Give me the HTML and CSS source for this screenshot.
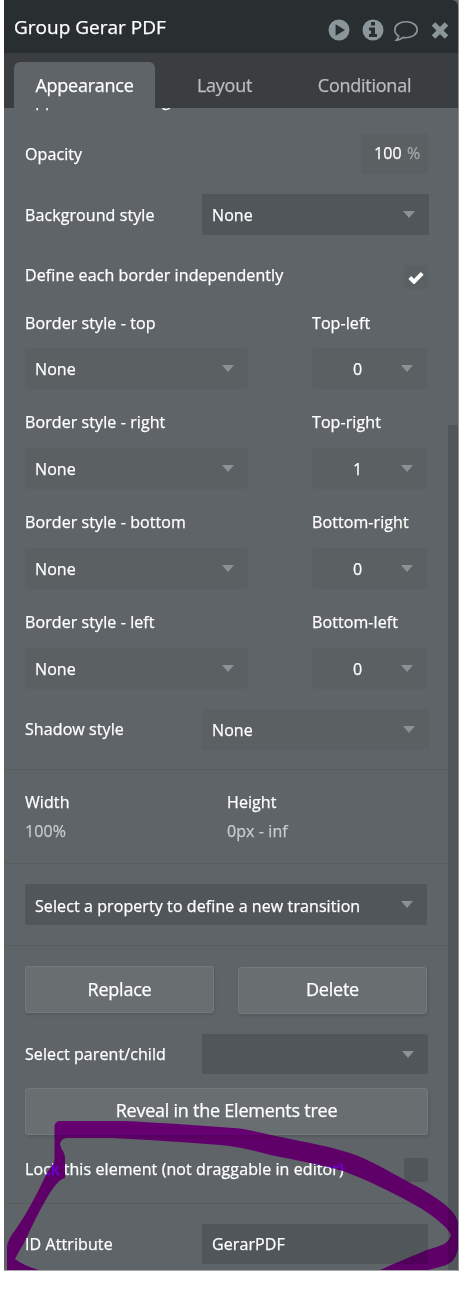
FILE: index.html
```html
<!DOCTYPE html>
<html lang="en">
<head>
    <meta charset="UTF-8">
    <meta name="viewport" content="width=device-width, initial-scale=1.0">
    <title>Group Gerar PDF</title>
    <link rel="stylesheet" href="styles.css">
</head>
<body>
    <div class="panel">
        <div class="panel-header">
            <h1>Group Gerar PDF</h1>
            <div class="header-icons">
                <svg width="22" height="22" viewBox="0 0 22 22"><path fill-rule="evenodd" d="M11 .5a10.5 10.5 0 1 0 0 21a10.5 10.5 0 0 0 0-21zM7.600 5.300v11.400L17 11z"/></svg>
                <svg width="22" height="22" viewBox="0 0 22 22"><circle cx="11" cy="11" r="10.5"/><path class="icon-cut" d="M9 3h4v3.600H9zM7 8.500h6v6.400h2V18H7v-3.100h2v-3.300H7z"/></svg>
                <svg class="icon-comment" width="26" height="22" viewBox="0 0 26 22"><path d="M13 2.700c6.300 0 11.200 3.500 11.200 8s-4.900 8-11.200 8c-1 0-2-.1-2.900-.3C8.200 20 6 21 3.200 21.300c1.400-1.300 2.200-2.500 2.500-4.100C3.300 15.600 1.800 13.300 1.800 10.700c0-4.500 4.900-8 11.200-8z"/></svg>
                <svg class="icon-close" width="18" height="18" viewBox="0 0 18 18"><path d="M2.500 3l13 13M15.500 3l-13 13"/></svg>
            </div>
        </div>
        <div class="tabs">
            <div class="tab active">Appearance</div>
            <div class="tab tab-layout">Layout</div>
            <div class="tab tab-conditional">Conditional</div>
        </div>
        <div class="panel-body">
            <div class="properties">
                <div class="section-title"><span>Appearance settings</span></div>
                <div class="row opacity-row">
                    <label>Opacity</label>
                    <div class="field number">100 <span>%</span></div>
                </div>
                <div class="row background-row">
                    <label>Background style</label>
                    <div class="field select wide dark">None</div>
                </div>
                <div class="row check-row">
                    <label>Define each border independently</label>
                    <div class="checkbox">
                        <svg width="16" height="13" viewBox="0 0 16 13"><path d="M1.800 6.500l4.200 4.200L14.200 2.300"/></svg>
                    </div>
                </div>
                <div class="border-grid">
                    <label>Border style - top</label>
                    <label>Top-left</label>
                    <div class="field select">None</div>
                    <div class="field select radius">0</div>
                    <label>Border style - right</label>
                    <label>Top-right</label>
                    <div class="field select">None</div>
                    <div class="field select radius">1</div>
                    <label>Border style - bottom</label>
                    <label>Bottom-right</label>
                    <div class="field select">None</div>
                    <div class="field select radius">0</div>
                    <label>Border style - left</label>
                    <label>Bottom-left</label>
                    <div class="field select">None</div>
                    <div class="field select radius">0</div>
                </div>
                <div class="row shadow-row">
                    <label>Shadow style</label>
                    <div class="field select wide">None</div>
                </div>
                <div class="section size-section">
                    <div class="size">
                        <label>Width</label>
                        <p>100%</p>
                    </div>
                    <div class="size">
                        <label>Height</label>
                        <p>0px - inf</p>
                    </div>
                </div>
                <div class="section transition-section">
                    <div class="field select dark">Select a property to define a new transition</div>
                </div>
                <div class="section action-section">
                    <div class="buttons">
                        <button>Replace</button>
                        <button class="delete">Delete</button>
                    </div>
                    <div class="row parent-row">
                        <label>Select parent/child</label>
                        <div class="field select wide dark"></div>
                    </div>
                    <button class="reveal">Reveal in the Elements tree</button>
                    <div class="row lock-row">
                        <label>Lock this element (not draggable in editor)</label>
                        <div class="checkbox dark"></div>
                    </div>
                </div>
                <div class="section id-section">
                    <div class="row">
                        <label>ID Attribute</label>
                        <div class="field wide dark">GerarPDF</div>
                    </div>
                </div>
            </div>
            <div class="scrollbar"><div class="scrollbar-thumb"></div></div>
        </div>
        <!-- hand-drawn marker around the ID attribute -->
        <svg class="marker" width="464" height="160" viewBox="0 1120 464 160">
            <path fill-rule="evenodd" d="M59 1121H125C165 1123 205 1126 240 1128.500C260 1132 280 1137 300 1141C325 1146 345 1150 365 1159C385 1168 400 1178 420 1188C440 1200 455 1210 458 1222V1249C456 1260 450 1264 443 1266L428 1270H380C395 1263 413 1256 427 1250C440 1246 449 1244 451 1235C449 1229 436 1218 422 1209C400 1196 370 1181 343 1171C318 1164 296 1160 275 1156C255 1151 240 1146.500 220 1145C185 1142 150 1140 112 1138H66Q61 1139 60 1144C61 1150 65 1152 65 1158V1178C59 1179 53 1188 48 1196C39 1211 31 1228 24 1243Q19 1251 15 1259Q24 1266 39 1270H7V1246C9 1237 14 1232 18 1226C28 1211 37 1194 45 1177C49 1168 55 1165 54.500 1158V1126Q55 1122 59 1121z"/>
        </svg>
    </div>
</body>
</html>
```
FILE: styles.css
```css
* {
    box-sizing: border-box;
}
body {
    margin: 0;
    background-color: #fff;
    font-family: "Open Sans", "Noto Sans", sans-serif;
    font-size: 16px;
    letter-spacing: 0.09px;
    -webkit-text-stroke: 0.25px;
    color: #fff;
}
.panel {
    position: relative;
    width: 455px;
    height: 1271px;
    margin-left: 4px;
    display: flex;
    flex-direction: column;
    background-color: #5f6468;
    border-right: 1px solid #8e9193;
    border-bottom: 1px solid #a5a7a9;
}
.panel-header {
    height: 53px;
    padding: 0 9px 0 10px;
    display: flex;
    justify-content: space-between;
    background-color: #292f31;
    border-top-right-radius: 6px;
}
.panel-header h1 {
    margin: 0;
    font-size: 19px;
    font-weight: 400;
    letter-spacing: 0;
    line-height: 54px;
}
.header-icons {
    display: flex;
    align-items: center;
    padding-top: 6px;
    fill: #8b969b;
}
.header-icons svg + svg {
    margin-left: 12px;
}
.header-icons .icon-cut {
    fill: #292f31;
}
.header-icons svg.icon-comment {
    margin-left: 9px;
    fill: none;
    stroke: #8b969b;
    stroke-width: 1.6;
}
.header-icons .icon-close {
    stroke: #8b969b;
    stroke-width: 5;
}
.tabs {
    height: 55px;
    padding: 9px 0 0 10px;
    display: flex;
    background-color: #3a3e40;
    font-size: 18px;
    letter-spacing: -0.25px;
    line-height: 46px;
}
.tab {
    color: #bbbdbe;
    text-align: center;
}
.tab.active {
    width: 141px;
    color: #fff;
    background-color: #5f6468;
    border-radius: 6px 6px 0 0;
}
.tab-layout {
    width: 139px;
}
.tab-conditional {
    width: 141px;
}
.panel-body {
    flex: 1;
    display: flex;
    overflow: hidden;
}
.properties {
    width: 444px;
    padding-left: 21px;
}
.scrollbar {
    width: 10px;
    padding-top: 317px;
}
.scrollbar-thumb {
    height: 100%;
    background-color: #505659;
}
.section-title {
    height: 26px;
    overflow: hidden;
}
.section-title span {
    display: block;
    margin-top: -19px;
    line-height: 22px;
}
label {
    line-height: 22px;
}
.row {
    display: flex;
    justify-content: space-between;
    align-items: center;
    width: 403px;
}
.field {
    position: relative;
    height: 41px;
    padding-left: 10px;
    line-height: 42px;
    background-color: #5b6062;
    border-radius: 2px;
}
.field.dark, .checkbox.dark {
    background-color: #505659;
}
.field.wide {
    width: 227px;
}
.select::after {
    content: "";
    position: absolute;
    top: 17px;
    right: 14px;
    border: 6px solid transparent;
    border-top: 7px solid #8b9194;
    border-bottom: 0;
}
.number {
    width: 67px;
    height: 40px;
    padding-left: 13px;
    line-height: 39px;
}
.number span {
    margin-left: 1px;
    color: #a5a8aa;
}
.background-row {
    width: 404px;
    margin-top: 20px;
}
.check-row {
    align-items: flex-start;
    margin-top: 30px;
}
.check-row label {
    margin-top: -1px;
}
.checkbox {
    width: 24px;
    height: 24px;
    display: flex;
    justify-content: center;
    align-items: center;
    background-color: #5b6062;
    border-radius: 2px;
}
.checkbox path {
    fill: none;
    stroke: #fff;
    stroke-width: 4;
}
.border-grid {
    display: grid;
    grid-template-columns: 223px 115px;
    grid-template-rows: 36px 41px 59px 41px 59px 41px 59px 41px;
    column-gap: 64px;
    margin-top: 23px;
}
.border-grid label {
    align-self: start;
    margin-top: 22px;
}
.border-grid label:nth-child(-n+2) {
    margin-top: 0;
}
.border-grid .radius {
    padding-left: 41px;
}
.shadow-row {
    width: 404px;
    margin-top: 20px;
}
.shadow-row label {
    margin-bottom: 2px;
}
.section {
    margin-left: -21px;
    padding: 20px 0 0 21px;
    border-top: 1px solid #585d60;
}
.size-section {
    height: 94px;
    margin-top: 19px;
    padding-top: 21px;
    display: flex;
}
.size {
    width: 202px;
}
.size label {
    display: block;
}
.size p {
    margin: 7px 0 0;
    line-height: 22px;
    color: #c9cbcc;
}
.transition-section {
    height: 82px;
}
.transition-section .field {
    width: 402px;
    line-height: 44px;
}
.action-section {
    height: 258px;
}
.buttons {
    width: 402px;
    display: flex;
    justify-content: space-between;
}
button {
    width: 189px;
    height: 47px;
    padding: 0 0 2px;
    font-family: inherit;
    font-size: 18px;
    letter-spacing: -0.24px;
    color: #fff;
    background-color: #696e71;
    border: 1px solid #75797c;
    border-radius: 3px;
    box-shadow: 1px 2px 3px rgba(0, 0, 0, 0.1);
}
.delete {
    margin-top: 1px;
    padding-bottom: 4px;
}
.parent-row {
    margin-top: 20px;
}
.parent-row .field, .id-section .field {
    width: 226px;
    height: 40px;
    line-height: 40px;
}
.reveal {
    display: block;
    width: 403px;
    margin-top: 14px;
    padding-bottom: 3px;
}
.lock-row {
    margin-top: 23px;
}
.lock-row label {
    margin-bottom: 2px;
}
.marker {
    position: absolute;
    top: 1120px;
    left: -4px;
    fill: #6600cc;
    mix-blend-mode: darken;
}
```
